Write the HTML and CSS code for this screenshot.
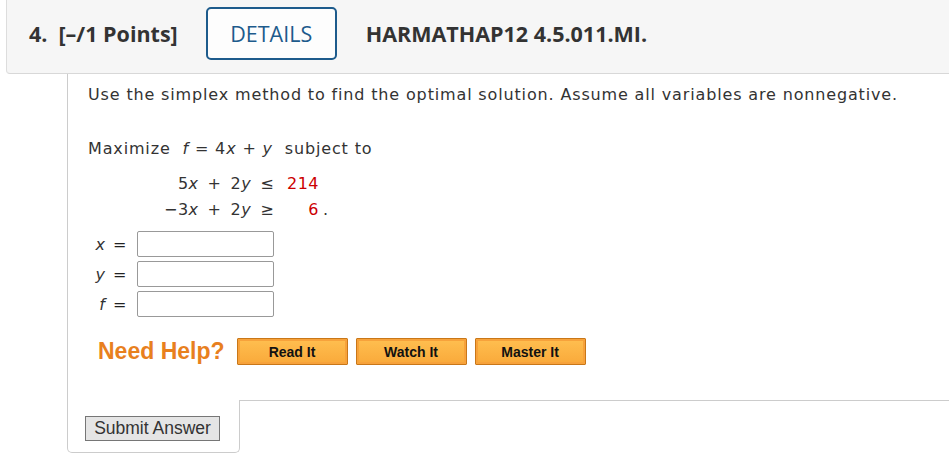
FILE: index.html
```html
<!DOCTYPE html>
<html lang="en">
<head>
  <meta charset="UTF-8">
  <title>Question 4</title>
  <link rel="stylesheet" href="styles.css">
</head>
<body>
  <div class="question-header">
    <span class="q-num">4.</span>
    <span class="q-points">[–/1 Points]</span>
    <button class="details-btn">DETAILS</button>
    <span class="q-code">HARMATHAP12 4.5.011.MI.</span>
  </div>

  <div class="question-body">
    <p class="prompt">Use the simplex method to find the optimal solution. Assume all variables are nonnegative.</p>

    <p class="objective">Maximize&nbsp; <i>f</i> = 4<i>x</i> + <i>y</i>&nbsp; subject to</p>

    <table class="constraints">
      <tr>
        <td class="lhs">5<i>x</i></td><td class="op">+</td><td>2<i>y</i></td><td class="op">≤</td>
        <td class="rhs">214</td><td class="dot"></td>
      </tr>
      <tr>
        <td class="lhs">−3<i>x</i></td><td class="op">+</td><td>2<i>y</i></td><td class="op">≥</td>
        <td class="rhs">6</td><td class="dot">.</td>
      </tr>
    </table>

    <div class="answers">
      <label><i>x</i></label><span class="eq">=</span><input type="text">
      <label><i>y</i></label><span class="eq">=</span><input type="text">
      <label><i>f</i></label><span class="eq">=</span><input type="text">
    </div>

    <div class="help">
      <span class="help-label">Need Help?</span>
      <button class="help-btn">Read It</button>
      <button class="help-btn">Watch It</button>
      <button class="help-btn">Master It</button>
    </div>
  </div>

  <div class="question-footer">
    <div class="submit-tab">
      <button class="submit-btn">Submit Answer</button>
    </div>
    <div class="footer-rest"></div>
  </div>
</body>
</html>
```

FILE: styles.css
```css
* {
  box-sizing: border-box;
}

body {
  margin: 0;
  background: #fff;
  color: #333;
  font-family: 'DejaVu Sans', Verdana, sans-serif;
  overflow: hidden;
}

.question-header {
  display: flex;
  align-items: center;
  height: 74px;
  margin-left: 6px;
  padding: 0 0 6px 22px;
  background: #f6f6f6;
  border-left: 1px solid #ddd;
  border-bottom: 1px solid #d8d8d8;
  border-bottom-left-radius: 4px;
  font-family: 'Open Sans', sans-serif;
  font-size: 21.5px;
  color: #333;
}

.q-num {
  font-weight: bold;
  margin-right: 11px;
}

.q-points {
  font-weight: bold;
  margin-right: 28px;
}

.details-btn {
  height: 53px;
  width: 131px;
  padding: 0;
  background: #fdfdfd;
  border: 2px solid #1d5b8c;
  border-radius: 5px;
  color: #1d5b8c;
  font-family: 'Open Sans', sans-serif;
  font-size: 21.5px;
  margin-right: 29px;
}

.q-code {
  font-weight: bold;
}

.question-body {
  margin-left: 67px;
  padding: 10px 0 35px 20px;
  border-left: 1px solid #ccc;
  letter-spacing: 0.85px;
}

.prompt {
  margin: 0 0 32px 0;
  font-size: 16px;
  line-height: 22px;
  color: #333;
}

.objective {
  margin: 0 0 11px 0;
  font-size: 16px;
  line-height: 22px;
}

.constraints {
  border-collapse: collapse;
  margin-left: 76px;
  font-size: 16px;
  line-height: 26px;
  letter-spacing: 0.5px;
}

.constraints td {
  padding: 0;
}

.constraints .lhs {
  text-align: right;
}

.constraints .op {
  padding: 0 9px;
}

.constraints .rhs {
  color: #c00;
  text-align: right;
  min-width: 36px;
  width: 36px;
}

.constraints .dot {
  padding-left: 4px;
}

.answers {
  display: grid;
  grid-template-columns: 15px 32px 137px;
  row-gap: 4px;
  align-items: center;
  margin-top: 8px;
  margin-left: 2px;
  font-size: 16px;
  letter-spacing: 0;
}

.answers label {
  text-align: right;
}

.answers .eq {
  padding-left: 8px;
  color: #222;
  font-size: 16px;
}

.answers input {
  width: 137px;
  height: 26px;
  border: 1px solid #999;
  border-radius: 2px;
  margin: 0;
}

.help {
  display: flex;
  align-items: center;
  margin-top: 21px;
  margin-left: 10px;
  font-family: 'Liberation Sans', Arial, sans-serif;
  letter-spacing: 0;
}

.help-label {
  color: #e8801e;
  font-size: 23px;
  font-weight: bold;
  margin-right: 12px;
}

.help-btn {
  height: 27px;
  width: 111px;
  margin-right: 8px;
  padding: 0;
  background: linear-gradient(#ffbf50, #f9a93a);
  border: 1px solid #c97718;
  box-shadow: inset 0 0 0 2px #f7a23b;
  border-radius: 1px;
  font-family: 'Liberation Sans', Arial, sans-serif;
  font-size: 14px;
  font-weight: bold;
  color: #111;
}

.question-footer {
  display: flex;
  margin-left: 67px;
}

.submit-tab {
  width: 173px;
  height: 53px;
  padding: 16px 0 0 17px;
  border: 1px solid #ccc;
  border-top: none;
  border-radius: 0 0 5px 5px;
}

.footer-rest {
  flex: 1;
  border-top: 1px solid #ccc;
}

.submit-btn {
  height: 25px;
  width: 135px;
  padding: 0;
  background: #e5e5e5;
  border: 1px solid #767676;
  border-radius: 0;
  font-family: 'Liberation Sans', Arial, sans-serif;
  font-size: 17.5px;
  color: #333;
}
```
